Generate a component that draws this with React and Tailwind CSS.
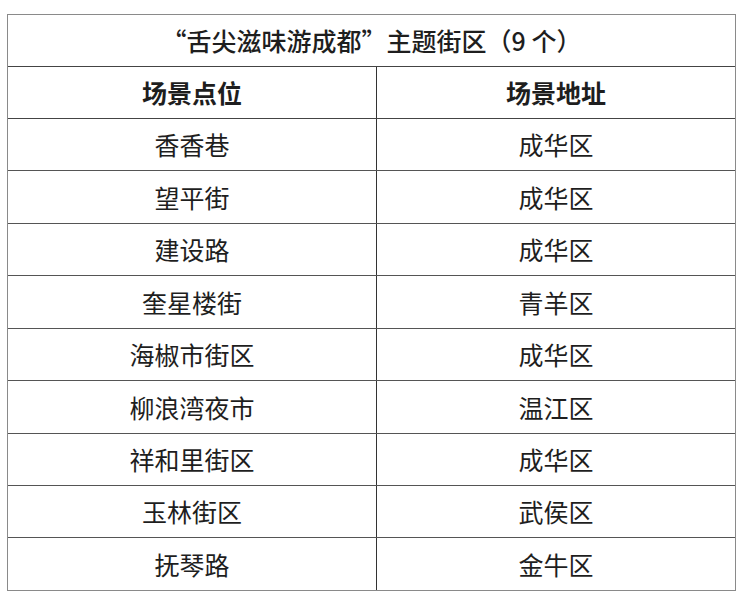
export default function App() {
  const rows = [
    ["香香巷", "成华区", "h-[52px]"],
    ["望平街", "成华区", "h-[53px]"],
    ["建设路", "成华区", "h-[52px]"],
    ["奎星楼街", "青羊区", "h-[53px]"],
    ["海椒市街区", "成华区", "h-[52px]"],
    ["柳浪湾夜市", "温江区", "h-[53px]"],
    ["祥和里街区", "成华区", "h-[52px]"],
    ["玉林街区", "武侯区", "h-[52px]"],
    ["抚琴路", "金牛区", "h-[52px]"],
  ];
  return (
    <div
      lang="zh-CN"
      className="w-[743px] h-[604px] bg-white pt-[14px] pl-[7px] text-[#1e1e1e] text-[25px] leading-none"
      style={{ fontFamily: '"Noto Sans CJK SC", sans-serif' }}
    >
      <div className="w-[729px] border border-[#8a8a8a]">
        <div className="h-[52px] flex items-center justify-center border-b border-[#444] font-medium">
          <span>“</span>舌尖滋味游成都<span>”</span>主题街区（9 个）
        </div>
        <div className="h-[52px] flex border-b border-[#444] font-bold">
          <div className="w-[369px] flex items-center justify-center border-r border-[#333]">场景点位</div>
          <div className="flex-1 flex items-center justify-center">场景地址</div>
        </div>
        {rows.map(([a, b, h], i) => (
          <div
            key={i}
            className={`${h} flex ${i < rows.length - 1 ? "border-b border-[#555]" : ""}`}
          >
            <div className="w-[369px] flex items-center justify-center border-r border-[#333]">{a}</div>
            <div className="flex-1 flex items-center justify-center">{b}</div>
          </div>
        ))}
      </div>
    </div>
  );
}
